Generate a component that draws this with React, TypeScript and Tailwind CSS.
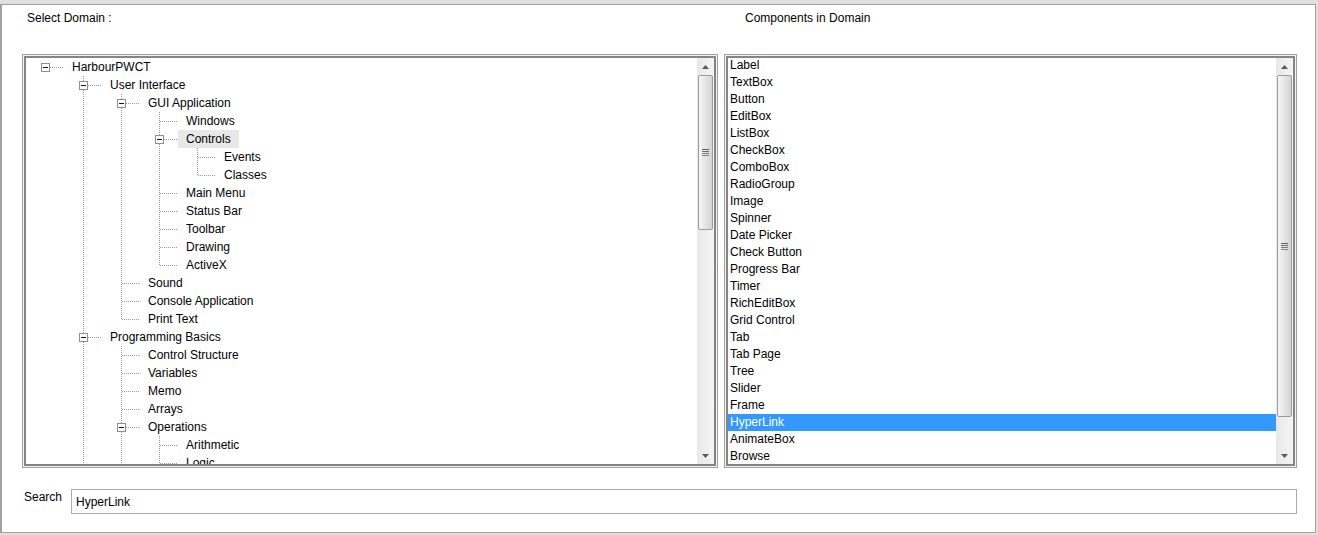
import React from "react";

type Row = {
  label: string;
  depth: number;
  guides: boolean[];
  box?: boolean;
  last?: boolean;
  root?: boolean;
  sel?: boolean;
};

const F = false;
const T = true;

const rows: Row[] = [
  { label: "HarbourPWCT", depth: 0, guides: [], box: true, root: true },
  { label: "User Interface", depth: 1, guides: [F], box: true },
  { label: "GUI Application", depth: 2, guides: [F, T], box: true },
  { label: "Windows", depth: 3, guides: [F, T, T] },
  { label: "Controls", depth: 3, guides: [F, T, T], box: true, sel: true },
  { label: "Events", depth: 4, guides: [F, T, T, T] },
  { label: "Classes", depth: 4, guides: [F, T, T, T], last: true },
  { label: "Main Menu", depth: 3, guides: [F, T, T] },
  { label: "Status Bar", depth: 3, guides: [F, T, T] },
  { label: "Toolbar", depth: 3, guides: [F, T, T] },
  { label: "Drawing", depth: 3, guides: [F, T, T] },
  { label: "ActiveX", depth: 3, guides: [F, T, T], last: true },
  { label: "Sound", depth: 2, guides: [F, T] },
  { label: "Console Application", depth: 2, guides: [F, T] },
  { label: "Print Text", depth: 2, guides: [F, T], last: true },
  { label: "Programming Basics", depth: 1, guides: [F], box: true },
  { label: "Control Structure", depth: 2, guides: [F, T] },
  { label: "Variables", depth: 2, guides: [F, T] },
  { label: "Memo", depth: 2, guides: [F, T] },
  { label: "Arrays", depth: 2, guides: [F, T] },
  { label: "Operations", depth: 2, guides: [F, T], box: true },
  { label: "Arithmetic", depth: 3, guides: [F, T, T] },
  { label: "Logic", depth: 3, guides: [F, T, T] },
];

const items = [
  "Label",
  "TextBox",
  "Button",
  "EditBox",
  "ListBox",
  "CheckBox",
  "ComboBox",
  "RadioGroup",
  "Image",
  "Spinner",
  "Date Picker",
  "Check Button",
  "Progress Bar",
  "Timer",
  "RichEditBox",
  "Grid Control",
  "Tab",
  "Tab Page",
  "Tree",
  "Slider",
  "Frame",
  "HyperLink",
  "AnimateBox",
  "Browse",
];

const DOT = "#9a9a9a";

function Guide({ on }: { on: boolean }) {
  return (
    <svg width="38" height="18" className="block shrink-0">
      {on && (
        <line
          x1="19.5"
          y1="0"
          x2="19.5"
          y2="18"
          stroke={DOT}
          strokeDasharray="1 1"
          shapeRendering="crispEdges"
        />
      )}
    </svg>
  );
}

function Connector({ row }: { row: Row }) {
  return (
    <svg width="38" height="18" className="block shrink-0">
      {!row.root && (
        <line
          x1="19.5"
          y1="0"
          x2="19.5"
          y2={row.last ? 10 : 18}
          stroke={DOT}
          strokeDasharray="1 1"
          shapeRendering="crispEdges"
        />
      )}
      <line
        x1={row.box ? 24 : 20}
        y1="9.5"
        x2="38"
        y2="9.5"
        stroke={DOT}
        strokeDasharray="1 1"
        shapeRendering="crispEdges"
      />
      {row.box && (
        <>
          <rect
            x="15.5"
            y="5.5"
            width="8"
            height="8"
            fill="#ffffff"
            stroke="#8e8e8e"
            shapeRendering="crispEdges"
          />
          <line
            x1="17"
            y1="9.5"
            x2="22"
            y2="9.5"
            stroke="#111111"
            shapeRendering="crispEdges"
          />
        </>
      )}
    </svg>
  );
}

function Arrow({ up }: { up: boolean }) {
  return (
    <div className="h-[17px] flex items-center justify-center shrink-0">
      <svg width="7" height="4" viewBox="0 0 7 4" className="block">
        <path d={up ? "M0 4 L3.5 0 L7 4 Z" : "M0 0 L3.5 4 L7 0 Z"} fill="#5a5a5a" />
      </svg>
    </div>
  );
}

function Grip() {
  return (
    <div className="flex flex-col gap-px">
      <div className="w-[7px] h-px bg-[#5f5f5f]" />
      <div className="w-[7px] h-px bg-[#6f6f6f]" />
      <div className="w-[7px] h-px bg-[#7a7a7a]" />
      <div className="w-[7px] h-px bg-[#858585]" />
    </div>
  );
}

function ScrollBar({ long }: { long: boolean }) {
  return (
    <div className="w-[17px] h-full shrink-0 flex flex-col bg-linear-to-r from-[#e8e8e8] to-[#f5f5f5]">
      <Arrow up={true} />
      <div className="flex-1 min-h-0">
        <div
          className={
            long
              ? "mx-px h-[342px] rounded-[2px] border border-[#9c9c9c] bg-linear-to-r from-[#f6f6f6] to-[#d4d4d4] flex items-center justify-center"
              : "mx-px h-[155px] rounded-[2px] border border-[#9c9c9c] bg-linear-to-r from-[#f6f6f6] to-[#d4d4d4] flex items-center justify-center"
          }
        >
          <Grip />
        </div>
      </div>
      <Arrow up={false} />
    </div>
  );
}

function Frame({ children }: { children: React.ReactNode }) {
  return (
    <div className="mt-[29px] h-[414px] border border-[#a0a0a0]">
      <div className="h-full border border-[#f4f4f4]">
        <div className="h-full border-2 border-[#858585] flex bg-white overflow-hidden">
          {children}
        </div>
      </div>
    </div>
  );
}

export default function App() {
  return (
    <div className="w-[1318px] h-[535px] bg-[#e0e0e0] pt-[4px] font-['Liberation_Sans',Arial,sans-serif] text-[12px] text-black overflow-hidden">
      <div className="w-[1316px] h-[529px] bg-white border-t border-l-2 border-r border-b border-[#a0a0a0] flex flex-col">
        <div className="flex pl-[20px] pt-[6px] gap-[6px]">
          <div className="w-[696px] flex flex-col">
            <div className="pl-[5px] h-[14px] leading-[14px]">Select Domain :</div>
            <Frame>
              <div className="flex-1 min-w-0 overflow-hidden flex flex-col">
                {rows.map((r, i) => (
                  <div key={i} className="flex items-center h-[18px] shrink-0">
                    {r.guides.map((g, k) => (
                      <Guide key={k} on={g} />
                    ))}
                    <Connector row={r} />
                    <span
                      className={
                        r.sel
                          ? "px-2 h-[18px] leading-[18px] whitespace-nowrap bg-[#e8e8e8]"
                          : "px-2 h-[18px] leading-[18px] whitespace-nowrap"
                      }
                    >
                      {r.label}
                    </span>
                  </div>
                ))}
              </div>
              <ScrollBar long={false} />
            </Frame>
          </div>
          <div className="w-[573px] flex flex-col">
            <div className="pl-[21px] h-[14px] leading-[14px]">Components in Domain</div>
            <Frame>
              <div className="flex-1 min-w-0 overflow-hidden">
                <div className="-mt-px flex flex-col">
                  {items.map((it) => (
                    <div
                      key={it}
                      className={
                        it === "HyperLink"
                          ? "h-[17px] leading-[17px] pl-[2px] whitespace-nowrap bg-[#3399ff] text-white"
                          : "h-[17px] leading-[17px] pl-[2px] whitespace-nowrap"
                      }
                    >
                      {it}
                    </div>
                  ))}
                </div>
              </div>
              <ScrollBar long={true} />
            </Frame>
          </div>
        </div>
        <div className="flex items-start pl-[22px] mt-[21px]">
          <div className="w-[47px] pt-[1px] h-[14px] leading-[14px]">Search</div>
          <div className="w-[1226px] h-[25px] border border-[#ababab] flex items-center pl-[4px]">
            HyperLink
          </div>
        </div>
      </div>
    </div>
  );
}
